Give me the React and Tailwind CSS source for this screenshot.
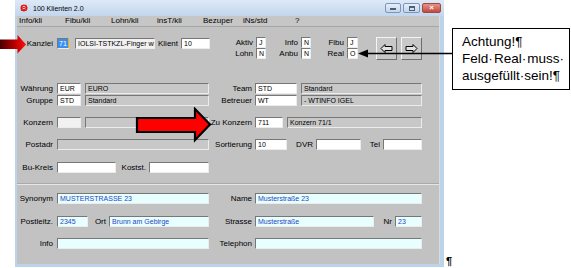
import React from 'react';

const Lbl = ({ children, className = '' }) => (
  <div className={`h-[11px] shrink-0 flex items-center justify-end whitespace-nowrap pr-[1px] text-[8px] leading-none text-black ${className}`}>
    {children}
  </div>
);

const tones = {
  white: 'bg-white text-black',
  pale: 'bg-[#f1f1f1] text-black',
  gray: 'bg-[#c8c8c8] text-black',
  cyan: 'bg-[#e8ffff] text-[#2446c4]',
};

const Fld = ({ children, className = '', tone = 'white' }) => (
  <div
    className={`h-[11px] shrink-0 flex items-center overflow-hidden whitespace-nowrap pl-[2px] text-[7px] leading-none border border-t-[#777] border-l-[#777] border-b-[#ececec] border-r-[#ececec] ${tones[tone]} ${className}`}
  >
    {children}
  </div>
);

const NavBtn = ({ left }) => (
  <div className="w-[21px] h-[23px] shrink-0 flex items-center justify-center bg-[#c8c8c8] border border-t-[#f4f4f4] border-l-[#f4f4f4] border-b-[#6e6e6e] border-r-[#6e6e6e]">
    <svg width="13" height="9" viewBox="0 0 13 9">
      <polygon
        points={left ? '1,4.5 5,0.5 5,2.5 12,2.5 12,6.5 5,6.5 5,8.5' : '12,4.5 8,0.5 8,2.5 1,2.5 1,6.5 8,6.5 8,8.5'}
        fill="#e4e4e4"
        stroke="#000"
        strokeWidth="1"
      />
    </svg>
  </div>
);

const menu = [
  ['Info/kli', 'w-[46px]'],
  ['Fibu/kli', 'w-[46px]'],
  ['Lohn/kli', 'w-[46px]'],
  ['insT/kli', 'w-[46px]'],
  ['Bezuper', 'w-[40px]'],
  ['iNs/std', 'w-[52px]'],
  ['?', 'w-[20px]'],
];

export default function App() {
  return (
    <div className="relative w-[571px] h-[268px] bg-white overflow-hidden font-['Liberation_Sans',Arial,sans-serif]">
      {/* window */}
      <div className="ml-[15px] w-[429px] h-[267px] bg-[#bcd3ec] flex flex-col">
        {/* title bar */}
        <div className="h-[16px] shrink-0 flex items-center pl-[5px] pr-[3px] bg-gradient-to-b from-[#dde9f7] to-[#c3d6ed]">
          <svg width="8" height="8" viewBox="0 0 8 8" className="shrink-0">
            <path d="M1 1.5 L3.5 0.5 L6.5 1 L7.5 3.5 L7 6.5 L4 7.5 L1 6.8 L0.5 4 Z" fill="#e01818" />
            <path d="M2.5 3 L4 2.2 L5.5 3.2 M2.6 5 L4.2 4.2 L5.4 5.2" stroke="#fff" strokeWidth="0.8" fill="none" />
          </svg>
          <span className="ml-[5px] text-[7px] leading-none text-black">100 Klienten 2.0</span>
          <div className="ml-auto flex items-center gap-[2px]">
            <div className="w-[16px] h-[10px] rounded-[2px] border border-[#7b96ba] bg-gradient-to-b from-[#e6eef8] to-[#c4d5eb] flex items-end justify-center pb-[2px]">
              <div className="w-[6px] h-[2px] bg-[#4a5f7c]" />
            </div>
            <div className="w-[17px] h-[10px] rounded-[2px] border border-[#7b96ba] bg-gradient-to-b from-[#e6eef8] to-[#c4d5eb] flex items-center justify-center">
              <div className="w-[6px] h-[5px] border border-[#4a5f7c] border-t-2" />
            </div>
            <div className="w-[19px] h-[10px] rounded-[2px] border border-[#9b4a44] bg-gradient-to-b from-[#e3938a] to-[#c5483d] flex items-center justify-center text-[8px] leading-none font-bold text-white">
              ×
            </div>
          </div>
        </div>

        {/* body */}
        <div className="flex-1 ml-[2px] mr-[4px] mb-[3px] bg-[#c2c2c2] flex flex-col border-r border-r-[#dcdcdc]">
          {/* menu */}
          <div className="h-[11px] shrink-0 flex items-center pl-[2px] border-b border-b-[#a6a6a6] bg-[#c6c6c6]">
            {menu.map(([t, w]) => (
              <span key={t} className={`${w} text-[8px] leading-none text-black`}>{t}</span>
            ))}
          </div>

          {/* row 1 */}
          <div className="mt-[10px] h-[23px] shrink-0 flex items-start">
            <div className="mt-[1px] flex items-center">
              <Lbl className="w-[37px]">Kanzlei</Lbl>
              <div className="ml-[3px] w-[12px] h-[11px] shrink-0 flex items-center border border-t-[#777] border-l-[#777] border-b-[#ececec] border-r-[#ececec] bg-white">
                <span className="h-[9px] flex items-center bg-[#3a8ef0] text-white text-[7px] leading-none px-[1px]">71</span>
                <span className="w-[2px] h-[9px] bg-[#f0b400]" />
              </div>
              <Fld className="ml-[6px] w-[80px] text-[6.5px]" tone="pale">IOLSI-TSTKZL-Finger wi</Fld>
              <Lbl className="w-[24px]">Klient</Lbl>
              <Fld className="ml-[2px] w-[29px]">10</Fld>
            </div>
            <div className="flex flex-col">
              <div className="flex items-center">
                <Lbl className="w-[44px]">Aktiv</Lbl>
                <Fld className="ml-[2px] w-[10px]">J</Fld>
              </div>
              <div className="flex items-center">
                <Lbl className="w-[44px]">Lohn</Lbl>
                <Fld className="ml-[2px] w-[10px]">N</Fld>
              </div>
            </div>
            <div className="flex flex-col">
              <div className="flex items-center">
                <Lbl className="w-[33px]">Info</Lbl>
                <Fld className="ml-[2px] w-[10px]">N</Fld>
              </div>
              <div className="flex items-center">
                <Lbl className="w-[33px]">Anbu</Lbl>
                <Fld className="ml-[2px] w-[10px]">N</Fld>
              </div>
            </div>
            <div className="flex flex-col">
              <div className="flex items-center">
                <Lbl className="w-[34px]">Fibu</Lbl>
                <Fld className="ml-[2px] w-[11px]">J</Fld>
              </div>
              <div className="flex items-center">
                <Lbl className="w-[34px]">Real</Lbl>
                <Fld className="ml-[2px] w-[11px]">O</Fld>
              </div>
            </div>
            <div className="ml-[18px] flex gap-[4px]">
              <NavBtn left />
              <NavBtn />
            </div>
          </div>

          {/* Währung / Gruppe */}
          <div className="mt-[23px] flex flex-col gap-[1px]">
            <div className="flex items-center">
              <Lbl className="w-[37px]">Währung</Lbl>
              <Fld className="ml-[3px] w-[24px]">EUR</Fld>
              <Fld className="ml-[4px] w-[124px]" tone="gray">EURO</Fld>
              <Lbl className="w-[44px]">Team</Lbl>
              <Fld className="ml-[2px] w-[42px]">STD</Fld>
              <Fld className="ml-[4px] w-[121px]" tone="gray">Standard</Fld>
            </div>
            <div className="flex items-center">
              <Lbl className="w-[37px]">Gruppe</Lbl>
              <Fld className="ml-[3px] w-[24px]">STD</Fld>
              <Fld className="ml-[4px] w-[124px]" tone="gray">Standard</Fld>
              <Lbl className="w-[44px]">Betreuer</Lbl>
              <Fld className="ml-[2px] w-[42px]">WT</Fld>
              <Fld className="ml-[4px] w-[121px]" tone="gray">- WTINFO IGEL</Fld>
            </div>
          </div>

          {/* Konzern */}
          <div className="mt-[11px] flex items-center">
            <Lbl className="w-[37px]">Konzern</Lbl>
            <Fld className="ml-[3px] w-[24px]" tone="pale" />
            <Fld className="ml-[4px] w-[124px]" tone="gray" />
            <Lbl className="w-[44px]">Zu Konzern</Lbl>
            <Fld className="ml-[2px] w-[28px]">711</Fld>
            <Fld className="ml-[4px] w-[135px]" tone="gray">Konzern 71/1</Fld>
          </div>

          {/* Postadr */}
          <div className="mt-[11px] flex items-center">
            <Lbl className="w-[37px]">Postadr</Lbl>
            <Fld className="ml-[3px] w-[152px]" tone="gray" />
            <Lbl className="w-[44px]">Sortierung</Lbl>
            <Fld className="ml-[2px] w-[32px]">10</Fld>
            <Lbl className="w-[27px]">DVR</Lbl>
            <Fld className="ml-[2px] w-[45px]" />
            <Lbl className="w-[20px]">Tel</Lbl>
            <Fld className="ml-[2px] w-[39px]" />
          </div>

          {/* Bu-Kreis */}
          <div className="mt-[12px] flex items-center">
            <Lbl className="w-[37px]">Bu-Kreis</Lbl>
            <Fld className="ml-[3px] w-[59px]" />
            <Lbl className="w-[31px]">Kostst.</Lbl>
            <Fld className="ml-[2px] w-[60px]" />
          </div>

          {/* separator */}
          <div className="mt-[10px] h-[2px] border-t border-t-[#a9a9a9] border-b border-b-[#e6e6e6]" />

          {/* Synonym */}
          <div className="mt-[8px] flex items-center">
            <Lbl className="w-[37px]">Synonym</Lbl>
            <Fld className="ml-[3px] w-[152px]" tone="cyan">MUSTERSTRASSE 23</Fld>
            <Lbl className="w-[44px]">Name</Lbl>
            <Fld className="ml-[2px] w-[167px]" tone="cyan">Musterstraße 23</Fld>
          </div>

          {/* Postleitz */}
          <div className="mt-[12px] flex items-center">
            <Lbl className="w-[37px]">Postleitz.</Lbl>
            <Fld className="ml-[3px] w-[31px]" tone="cyan">2345</Fld>
            <Lbl className="w-[19px]">Ort</Lbl>
            <Fld className="ml-[2px] w-[100px]" tone="cyan">Brunn am Gebirge</Fld>
            <Lbl className="w-[44px]">Strasse</Lbl>
            <Fld className="ml-[2px] w-[119px]" tone="cyan">Musterstraße</Fld>
            <Lbl className="w-[19px]">Nr</Lbl>
            <Fld className="ml-[2px] w-[27px]" tone="cyan">23</Fld>
          </div>

          {/* Info */}
          <div className="mt-[11px] flex items-center">
            <Lbl className="w-[37px]">Info</Lbl>
            <Fld className="ml-[3px] w-[152px]" tone="cyan" />
            <Lbl className="w-[44px]">Telephon</Lbl>
            <Fld className="ml-[2px] w-[167px]" tone="cyan" />
          </div>
        </div>
      </div>

      {/* red arrow at Kanzlei */}
      <svg className="absolute left-0 top-[35px]" width="27" height="19" viewBox="0 0 27 19">
        <defs>
          <linearGradient id="ra" x1="0" x2="1" y1="0" y2="0">
            <stop offset="0" stopColor="#4a0000" />
            <stop offset="0.6" stopColor="#c00000" />
            <stop offset="1" stopColor="#ff1010" />
          </linearGradient>
        </defs>
        <polygon points="0,4.5 17.5,4.5 17.5,0 26,9.5 17.5,18.5 17.5,14 0,14" fill="url(#ra)" />
      </svg>

      {/* red arrow at Zu Konzern */}
      <svg className="absolute left-[135px] top-[107px]" width="78" height="36" viewBox="0 0 78 36">
        <polygon points="2,11 60,11 60,2 75,17.5 60,33 60,25 2,25" fill="#ff0000" stroke="#000" strokeWidth="2.2" strokeLinejoin="miter" />
      </svg>

      {/* pointer line to Real */}
      <svg className="absolute left-[355px] top-[48px]" width="98" height="11" viewBox="0 0 98 11">
        <line x1="10" y1="5.5" x2="98" y2="5.5" stroke="#000" strokeWidth="1.3" />
        <polygon points="3,5.5 13,1.5 13,9.5" fill="#000" />
      </svg>

      {/* callout */}
      <div className="absolute left-[452px] top-[28px] w-[118px] h-[62px] bg-white border border-black pl-[9px] pt-[4px] text-[13.5px] leading-[17px] text-black whitespace-nowrap">
        <div>Achtung!¶</div>
        <div>Feld·&#8202;Real·&#8202;muss·</div>
        <div>ausgefüllt·sein!¶</div>
      </div>

      {/* paragraph mark */}
      <span className="absolute left-[446px] top-[256px] text-[11px] leading-none font-bold text-black">¶</span>
    </div>
  );
}
